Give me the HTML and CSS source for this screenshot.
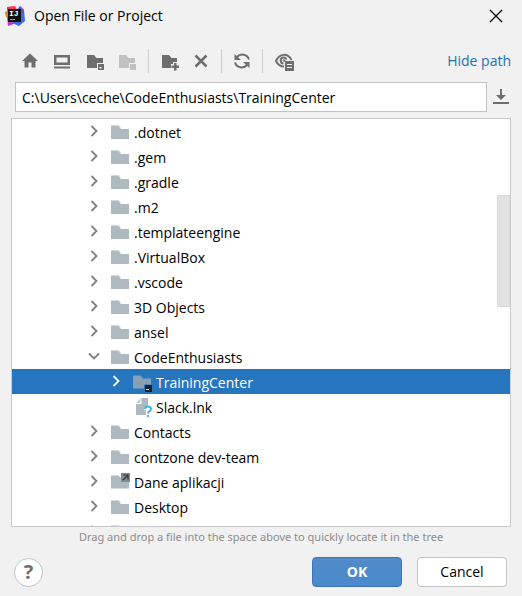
FILE: index.html
```
<!DOCTYPE html>
<html lang="en">
<head>
<meta charset="utf-8">
<title>Open File or Project</title>
<link rel="stylesheet" href="styles.css">
</head>
<body>
<svg class="defs" aria-hidden="true">
  <symbol id="folder" viewBox="0 0 18 14"><path fill="#d3d9dc" d="M0 0h8l2 3H0z"/><path fill="#afb9c0" d="M0 1h7l3 3h8v10H0z"/></symbol>
  <symbol id="folder-project" viewBox="0 0 20 17"><path fill="#879fb3" d="M0 .5h7.500l2.500 3h8v6h-7v4H0z"/><path fill="#231f20" d="M12 10h7v7h-7z"/><path fill="#d8d8d8" d="M13 14h3v1h-3z"/></symbol>
  <symbol id="folder-link" viewBox="0 0 20 17"><path fill="#afb9c0" d="M0 3.500h7.500l2.500 3h8v10H0z"/><path fill="#7f8b91" d="M10 1h9v9h-9z"/><path stroke="#33383b" stroke-width="1.200" fill="none" d="M12 8l5-5M12.500 3H17v4.500"/></symbol>
  <symbol id="file-unknown" viewBox="0 0 18 19"><path fill="#afb9c0" d="M6.500 0H13v8c-3 0-4 2-4 4h2v5H1V6h5.500z"/><path fill="#c5cdd2" d="M5.500 0v5H1z"/><path fill="none" stroke="#40b6e0" stroke-width="2" d="M10 11c0-3.500 6-3.500 6 0 0 2-3 2-3 4.500"/><path fill="#40b6e0" d="M12 17h2v2h-2z"/></symbol>
  <symbol id="closed" viewBox="0 0 12 12"><path fill="none" stroke="currentColor" stroke-width="1.800" d="M3.500 1l5 5-5 5"/></symbol>
  <symbol id="opened" viewBox="0 0 12 12"><path fill="none" stroke="currentColor" stroke-width="1.800" d="M1 3.500l5 5 5-5"/></symbol>
</svg>
<main class="dialog">
  <header class="titlebar">
    <svg class="logo" viewBox="0 0 20 20" aria-hidden="true">
      <path fill="#3b6cf0" d="M12 4l3-4 4 4 1 11-6 5-7-3z"/>
      <path fill="#6a4fd8" d="M12 5l3-5 4 4v5z"/>
      <path fill="#fe315d" d="M2 1l8-1 3 5-8 8-3-3z"/>
      <path fill="#f97a12" d="M0 6l4-2v9l-3-2z"/>
      <path fill="#b339c8" d="M2 11l6 4 1 3-6 2z"/>
      <path fill="#111" d="M3 3h13v13H3z"/>
      <text class="logo-text" x="4" y="10">IJ</text>
      <path fill="#999" d="M5 13h5v1H5z"/>
    </svg>
    <h1 class="title">Open File or Project</h1>
    <button class="close" aria-label="Close"><svg viewBox="0 0 12 12"><path stroke="#000" stroke-width="1.300" d="M0 0l12 12M12 0L0 12"/></svg></button>
  </header>

  <div class="toolbar">
    <div class="tools tools-places">
      <button class="tool" aria-label="Home"><svg viewBox="0 0 20 20"><path d="M10 2.500l8 7.500h-2.500v6.500h-4v-5h-3v5h-4V10H2z"/></svg></button>
      <button class="tool" aria-label="Desktop"><svg viewBox="0 0 20 20"><path fill-rule="evenodd" d="M2 4h16v10H2zM4.500 6.500v5h11v-5zM2 15.500h16v2H2z"/></svg></button>
      <button class="tool" aria-label="Project directory"><svg viewBox="0 0 20 20"><path d="M3 4h7l2.500 3H19v5h-6v5H3z"/><path fill-rule="evenodd" d="M14 13h6v6h-6zM15.500 16v1.500h2V16z"/></svg></button>
      <button class="tool" aria-label="Module directory" disabled><svg viewBox="0 0 20 20"><path d="M3 4h7l2.500 3H19v5h-6v5H3z"/><path d="M14 13h6v6h-6z"/></svg></button>
    </div>
    <span class="separator"></span>
    <div class="tools">
      <button class="tool" aria-label="New folder"><svg viewBox="0 0 20 20"><path d="M3 4h7l2.500 3H18v4h-4v2h-2v4H3z"/><path d="M15 12h2.500v2.500H20V17h-2.500v2.500H15V17h-2.500v-2.500H15z"/></svg></button>
      <button class="tool" aria-label="Delete"><svg viewBox="0 0 20 20"><path class="line thick" d="M4.500 4.500l11 11M15.500 4.500l-11 11"/></svg></button>
    </div>
    <span class="separator"></span>
    <button class="tool" aria-label="Refresh"><svg viewBox="0 0 20 20"><path class="line" d="M17 8.500A7 7 0 0 0 5 6M3 11.500A7 7 0 0 0 15 14"/><path d="M2.500 3v6H9zM17.500 17v-6H11z"/></svg></button>
    <span class="separator"></span>
    <button class="tool" aria-label="Show hidden files"><svg viewBox="0 0 20 20"><path class="line" d="M11 15.500C7 15.500 4.500 13 3 10c3.500-8 12-8 15.500-1"/><path class="line" d="M10.500 12.500a3 3 0 1 1 3-4"/><circle cx="11" cy="9.500" r="1.200"/><path fill-rule="evenodd" d="M12 10h9v10h-9zM14 13v1h5v-1zM14 16v1h5v-1z"/></svg></button>
    <a class="hide-path" href="#path">Hide path</a>
  </div>

  <div class="path-row">
    <input class="path" id="path" type="text" aria-label="Path" value="C:\Users\ceche\CodeEnthusiasts\TrainingCenter">
    <button class="history" aria-label="Path history"><svg viewBox="0 0 16 16"><path d="M7 0h2v6h4l-5 5-5-5h4zM0 13h16v2H0z"/></svg></button>
  </div>

  <div class="tree-box">
    <ul class="tree" role="tree">
      <li class="row" role="treeitem"><svg class="arrow"><use href="#closed"/></svg><svg class="folder"><use href="#folder"/></svg><span>.dotnet</span></li>
      <li class="row" role="treeitem"><svg class="arrow"><use href="#closed"/></svg><svg class="folder"><use href="#folder"/></svg><span>.gem</span></li>
      <li class="row" role="treeitem"><svg class="arrow"><use href="#closed"/></svg><svg class="folder"><use href="#folder"/></svg><span>.gradle</span></li>
      <li class="row" role="treeitem"><svg class="arrow"><use href="#closed"/></svg><svg class="folder"><use href="#folder"/></svg><span>.m2</span></li>
      <li class="row" role="treeitem"><svg class="arrow"><use href="#closed"/></svg><svg class="folder"><use href="#folder"/></svg><span>.templateengine</span></li>
      <li class="row" role="treeitem"><svg class="arrow"><use href="#closed"/></svg><svg class="folder"><use href="#folder"/></svg><span>.VirtualBox</span></li>
      <li class="row" role="treeitem"><svg class="arrow"><use href="#closed"/></svg><svg class="folder"><use href="#folder"/></svg><span>.vscode</span></li>
      <li class="row" role="treeitem"><svg class="arrow"><use href="#closed"/></svg><svg class="folder"><use href="#folder"/></svg><span>3D Objects</span></li>
      <li class="row" role="treeitem"><svg class="arrow"><use href="#closed"/></svg><svg class="folder"><use href="#folder"/></svg><span>ansel</span></li>
      <li class="row" role="treeitem" aria-expanded="true"><svg class="arrow"><use href="#opened"/></svg><svg class="folder"><use href="#folder"/></svg><span>CodeEnthusiasts</span></li>
      <li class="row nested selected" role="treeitem" aria-selected="true"><svg class="arrow"><use href="#closed"/></svg><svg class="folder badged"><use href="#folder-project"/></svg><span>TrainingCenter</span></li>
      <li class="row nested" role="treeitem"><span class="arrow"></span><svg class="file"><use href="#file-unknown"/></svg><span>Slack.lnk</span></li>
      <li class="row" role="treeitem"><svg class="arrow"><use href="#closed"/></svg><svg class="folder"><use href="#folder"/></svg><span>Contacts</span></li>
      <li class="row" role="treeitem"><svg class="arrow"><use href="#closed"/></svg><svg class="folder"><use href="#folder"/></svg><span>contzone dev-team</span></li>
      <li class="row" role="treeitem"><svg class="arrow"><use href="#closed"/></svg><svg class="folder linked"><use href="#folder-link"/></svg><span>Dane aplikacji</span></li>
      <li class="row" role="treeitem"><svg class="arrow"><use href="#closed"/></svg><svg class="folder"><use href="#folder"/></svg><span>Desktop</span></li>
      <li class="row" role="treeitem"><svg class="arrow"><use href="#closed"/></svg><svg class="folder"><use href="#folder"/></svg></li>
    </ul>
    <div class="thumb"></div>
  </div>
  <p class="hint">Drag and drop a file into the space above to quickly locate it in the tree</p>

  <footer class="actions">
    <button class="help" aria-label="Help">?</button>
    <button class="button primary">OK</button>
    <button class="button">Cancel</button>
  </footer>
</main>
</body>
</html>
```
FILE: styles.css
```
* { box-sizing: border-box; }

body {
  margin: 0;
  background: #f1f1f1;
  color: #000;
  font: 14px/20px "Open Sans", "Noto Sans", sans-serif;
}

button {
  margin: 0;
  padding: 0;
  border: 0;
  background: none;
  font: inherit;
  color: inherit;
}

svg { display: block; overflow: visible; flex: none; }

.defs { position: absolute; width: 0; height: 0; }

.dialog {
  display: flex;
  flex-direction: column;
  height: 100vh;
}

.titlebar {
  display: flex;
  align-items: center;
  height: 32px;
  padding: 0 20px 0 5px;
}

.logo { width: 20px; height: 20px; }

.logo-text { font: bold 8px "Liberation Mono", monospace; fill: #fff; }

.title {
  flex: 1;
  margin: 0 0 0 9px;
  font-size: 14px;
  font-weight: 400;
}

.close svg { width: 12px; height: 12px; }

.toolbar {
  display: flex;
  align-items: center;
  height: 50px;
  padding: 8px 11px 0 20px;
}

.tools { display: flex; gap: 12px; }

.tools-places { padding-right: 2px; }

.tool { width: 20px; height: 20px; fill: #6e6e6e; }

.tool:disabled { fill: #c1c1c1; }

.tool svg { width: 20px; height: 20px; }

.line { fill: none; stroke: #6e6e6e; stroke-width: 2; }

.thick { stroke-width: 2.5; }

.separator {
  width: 1px;
  height: 24px;
  margin: 0 10px;
  background: #cdcdcd;
}

.hide-path {
  margin-left: auto;
  color: #2470b3;
  text-decoration: none;
}

.path-row {
  display: flex;
  align-items: center;
  gap: 6px;
  padding: 0 13px 0 15px;
}

.path {
  flex: 1;
  min-width: 0;
  height: 30px;
  padding: 0 6px;
  border: 1px solid #c4c4c4;
  background: #fff;
  color: #000;
  font: inherit;
}

.history svg { width: 16px; height: 16px; fill: #6e6e6e; }

.tree-box {
  position: relative;
  flex: 1;
  min-height: 0;
  margin: 6px 11px 0;
  border: 1px solid #c9c9c9;
  background: #fff;
  overflow: hidden;
}

.tree { margin: 0; padding: 0; list-style: none; }

.row {
  display: flex;
  align-items: center;
  height: 25px;
  padding: 2px 0 0 76px;
}

.nested { padding-left: 98px; }

.selected { background: #2675bf; color: #fff; }

.arrow {
  width: 12px;
  height: 12px;
  margin: 0 11px 4px 0;
  color: #7f7f7f;
}

.selected .arrow { color: #fff; }

.folder { width: 18px; height: 14px; margin: 0 5px 2px 0; }

.badged { width: 20px; height: 17px; margin: 1px 3px 0 0; }

.linked { width: 20px; height: 17px; margin: 0 3px 5px 0; }

.file { width: 18px; height: 19px; margin: 0 3px 0 2px; }

.thumb {
  position: absolute;
  top: 76px;
  right: 0;
  width: 13px;
  height: 112px;
  border: 1px solid #d9d9d9;
  background: #e2e2e2;
}

.hint {
  margin: 0;
  font: 11px/20px "Noto Sans", sans-serif;
  color: #8c8c8c;
  text-align: center;
}

.actions {
  display: flex;
  align-items: center;
  gap: 15px;
  padding: 10px 15px 9px 14px;
}

.help {
  width: 29px;
  height: 29px;
  margin-right: auto;
  border: 1px solid #c4c4c4;
  border-radius: 50%;
  background: #fff;
  color: #6e6e6e;
  font-size: 20px;
  font-weight: 700;
}

.button {
  width: 90px;
  height: 30px;
  border: 1px solid #c4c4c4;
  border-radius: 4px;
  background: #fff;
}

.primary {
  border-color: #3d75b4;
  background: linear-gradient(#528cc7, #4989cc);
  color: #fff;
  font-weight: 700;
}
```
